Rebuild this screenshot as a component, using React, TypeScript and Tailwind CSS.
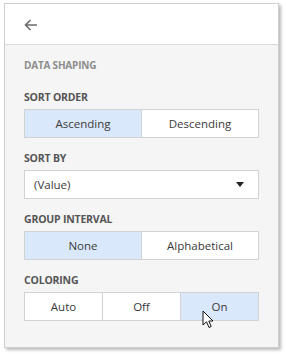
import { useState } from "react";

const font = { fontFamily: '"Open Sans", "Noto Sans", sans-serif' };

type GroupProps = {
  options: string[];
  value: string;
  onChange?: (v: string) => void;
};

const ButtonGroup = ({ options, value, onChange }: GroupProps) => {
  return (
    <div className="flex h-[29px] mt-[5px] border border-[#d2d2d2] bg-white">
      {options.map((opt, i) => (
        <button
          key={opt}
          onClick={() => onChange && onChange(opt)}
          className={
            "flex-1 flex items-center justify-center text-[11.5px] text-[#3a3a3a] " +
            (i > 0 ? "border-l border-[#d2d2d2] " : "") +
            (opt === value ? "bg-[#dae8fb]" : "bg-white")
          }
        >
          {opt}
        </button>
      ))}
    </div>
  );
};

const Label = ({ children }: { children: string }) => (
  <div className="h-[14px] leading-[14px] text-[10.5px] font-bold text-[#555] tracking-[-0.2px]">
    {children}
  </div>
);

const App = () => {
  const [order, setOrder] = useState("Ascending");
  const [interval, setInterval] = useState("None");
  const [coloring, setColoring] = useState("On");

  return (
    <div className="w-[286px] h-[357px] bg-white pl-[4px] pt-[3px]" style={font}>
      <div className="relative w-[275px] h-[345px] border border-[#cfcfcf] bg-[#f5f5f5] shadow-[2px_2px_3px_rgba(0,0,0,0.28)]">
        {/* header */}
        <div className="h-[41px] bg-white border-b border-[#d9d9d9] flex items-center pl-[19px]">
          <svg width="14" height="12" viewBox="0 0 14 12" className="mt-[1px]">
            <path
              d="M13 6 H1.5 M6.5 1 L1.5 6 L6.5 11"
              fill="none"
              stroke="#6b6b6b"
              strokeWidth="1.6"
            />
          </svg>
        </div>

        <div className="px-[19px] pt-[13px]">
          <div className="h-[14px] leading-[14px] text-[10px] font-bold text-[#8c8c8c] tracking-[-0.2px]">
            DATA SHAPING
          </div>

          <div className="mt-[18px]">
            <Label>SORT ORDER</Label>
            <ButtonGroup options={["Ascending", "Descending"]} value={order} onChange={setOrder} />
          </div>

          <div className="mt-[13px]">
            <Label>SORT BY</Label>
            <div className="flex items-center justify-between h-[29px] mt-[5px] border border-[#d2d2d2] bg-white pl-[9px] pr-[14px] text-[11.5px] text-[#3a3a3a]">
              <span>(Value)</span>
              <svg width="8" height="5" viewBox="0 0 8 5">
                <path d="M0 0 H8 L4 5 Z" fill="#222" />
              </svg>
            </div>
          </div>

          <div className="mt-[13px]">
            <Label>GROUP INTERVAL</Label>
            <ButtonGroup options={["None", "Alphabetical"]} value={interval} onChange={setInterval} />
          </div>

          <div className="mt-[13px]">
            <Label>COLORING</Label>
            <ButtonGroup options={["Auto", "Off", "On"]} value={coloring} onChange={setColoring} />
          </div>
        </div>

        {/* mouse pointer */}
        <svg
          width="13"
          height="20"
          viewBox="0 0 13 20"
          className="absolute left-[197px] top-[306px]"
        >
          <path
            d="M1 1 L1 15 L4.5 11.8 L7 17.5 L9.2 16.5 L6.8 11 L11 11 Z"
            fill="#fff"
            stroke="#111"
            strokeWidth="1"
            strokeLinejoin="round"
          />
        </svg>
      </div>
    </div>
  );
};

export default App;
